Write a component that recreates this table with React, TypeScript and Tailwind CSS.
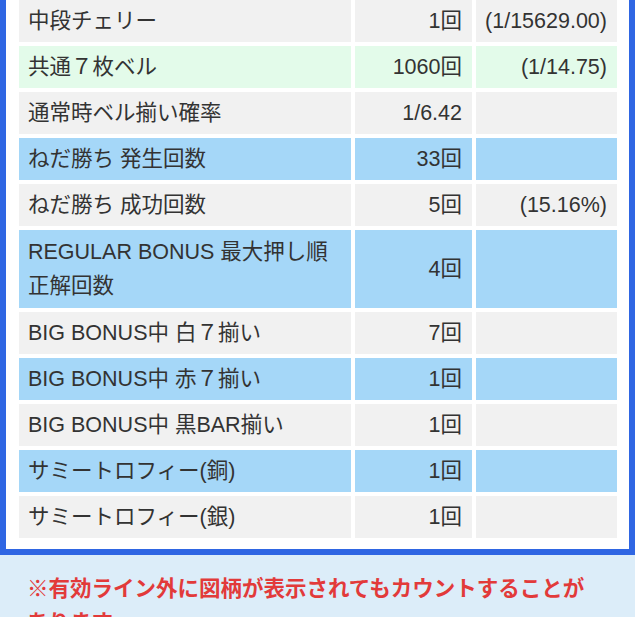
import React from "react";

type Row = {
  label: React.ReactNode;
  count: string;
  note?: string;
  tone: "gray" | "green" | "blue";
  tall?: boolean;
};

const rows: Row[] = [
  { label: "中段チェリー", count: "1回", note: "(1/15629.00)", tone: "gray" },
  { label: "共通７枚ベル", count: "1060回", note: "(1/14.75)", tone: "green" },
  { label: "通常時ベル揃い確率", count: "1/6.42", tone: "gray" },
  { label: "ねだ勝ち 発生回数", count: "33回", tone: "blue" },
  { label: "ねだ勝ち 成功回数", count: "5回", note: "(15.16%)", tone: "gray" },
  {
    label: (
      <>
        REGULAR BONUS 最大押し順
        <br />
        正解回数
      </>
    ),
    count: "4回",
    tone: "blue",
    tall: true,
  },
  { label: "BIG BONUS中 白７揃い", count: "7回", tone: "gray" },
  { label: "BIG BONUS中 赤７揃い", count: "1回", tone: "blue" },
  { label: "BIG BONUS中 黒BAR揃い", count: "1回", tone: "gray" },
  { label: "サミートロフィー(銅)", count: "1回", tone: "blue" },
  { label: "サミートロフィー(銀)", count: "1回", tone: "gray" },
];

const toneClass = {
  gray: "bg-[#f1f1f1]",
  green: "bg-[#e3fbea]",
  blue: "bg-[#a5d7f8]",
};

export default function App() {
  return (
    <div
      className="w-[635px] h-[617px] overflow-hidden bg-white text-[#333] text-[21.5px] leading-[34px]"
      style={{ fontFamily: '"Liberation Sans", "Noto Sans CJK JP", sans-serif' }}
    >
      <div className="border-x-[6px] border-b-[6px] border-[#2f66e3] bg-white px-[13px] pb-[11px]">
        <div className="grid grid-cols-[332px_117px_141px] gap-[4px]">
          {rows.map((row, i) => (
            <React.Fragment key={i}>
              <div
                className={`${toneClass[row.tone]} flex items-center pl-[9px] pr-2 py-1 ${
                  row.tall ? "min-h-[78px]" : "min-h-[42px]"
                }`}
              >
                <span>{row.label}</span>
              </div>
              <div
                className={`${toneClass[row.tone]} flex items-center justify-end pr-[10px] py-1`}
              >
                {row.count}
              </div>
              <div
                className={`${toneClass[row.tone]} flex items-center justify-end pr-[10px] py-1`}
              >
                {row.note ?? ""}
              </div>
            </React.Fragment>
          ))}
        </div>
      </div>
      <div className="bg-[#dcedf9] px-[27px] pt-[17px] pb-4">
        <p className="text-[#e23a3a] font-semibold">
          ※有効ライン外に図柄が表示されてもカウントすることが
          <br />
          あります。
        </p>
      </div>
    </div>
  );
}
